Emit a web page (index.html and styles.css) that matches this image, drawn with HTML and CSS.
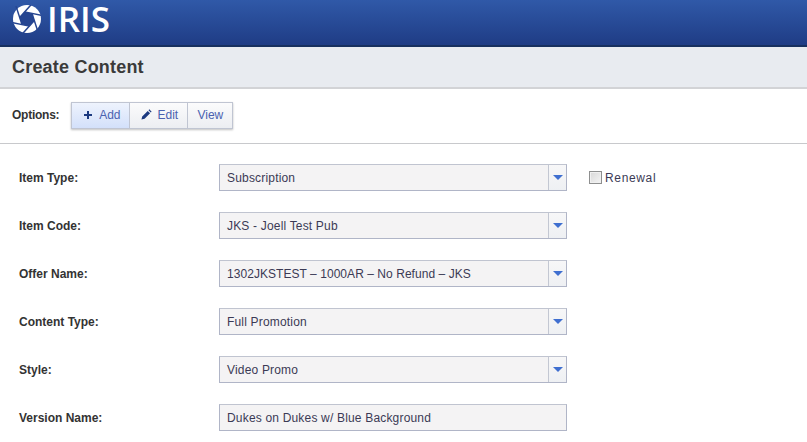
FILE: index.html
```html
<!DOCTYPE html>
<html lang="en">
<head>
<meta charset="utf-8">
<title>Create Content</title>
<link rel="stylesheet" href="styles.css">
</head>
<body>
<header class="topbar">
  <svg class="logo-mark" viewBox="-14 -14 28 28" width="28" height="28" aria-hidden="true">
    <circle r="14" fill="#fff"/>
    <g transform="rotate(12)">
      <polygon points="7.5,0 3.75,6.5 -3.75,6.5 -7.5,0 -3.75,-6.5 3.75,-6.5" fill="#264591"/>
      <g stroke="#264591" stroke-width="1.5">
        <path d="M7.5 0L-2.2 16.8"/>
        <path d="M7.5 0L-2.2 16.8" transform="rotate(60)"/>
        <path d="M7.5 0L-2.2 16.8" transform="rotate(120)"/>
        <path d="M7.5 0L-2.2 16.8" transform="rotate(180)"/>
        <path d="M7.5 0L-2.2 16.8" transform="rotate(240)"/>
        <path d="M7.5 0L-2.2 16.8" transform="rotate(300)"/>
      </g>
    </g>
  </svg>
  <span class="logo-text">IRIS</span>
</header>
<div class="titlebar"><h1 class="title">Create Content</h1></div>
<div class="options">
  <span class="options-label">Options:</span>
  <div class="btn-group">
    <button class="btn btn-add" type="button">
      <svg class="ico" viewBox="0 0 10 10" width="10" height="10" aria-hidden="true"><path d="M4 1h2v3h3v2H6v3H4V6H1V4h3z" fill="#1c3a80"/></svg>Add
    </button>
    <button class="btn btn-edit" type="button">
      <svg class="ico" viewBox="0 0 12 12" width="11" height="11" aria-hidden="true"><path d="M0.5 11.5l0.8-3.4 6-6 2.6 2.6-6 6zM8.2 1.3l0.9-0.9 2.5 2.5-0.9 0.9z" fill="#1c3a80"/></svg>Edit
    </button>
    <button class="btn btn-view" type="button">View</button>
  </div>
</div>
<main class="form">
  <div class="row">
    <label class="lbl">Item Type:</label>
    <div class="field"><span class="val">Subscription</span><span class="arrow"><i class="tri"></i></span></div>
    <label class="renewal"><i class="check"></i>Renewal</label>
  </div>
  <div class="row">
    <label class="lbl">Item Code:</label>
    <div class="field"><span class="val">JKS - Joell Test Pub</span><span class="arrow"><i class="tri"></i></span></div>
  </div>
  <div class="row">
    <label class="lbl">Offer Name:</label>
    <div class="field"><span class="val val-tight">1302JKSTEST – 1000AR – No Refund – JKS</span><span class="arrow"><i class="tri"></i></span></div>
  </div>
  <div class="row">
    <label class="lbl">Content Type:</label>
    <div class="field"><span class="val">Full Promotion</span><span class="arrow"><i class="tri"></i></span></div>
  </div>
  <div class="row">
    <label class="lbl">Style:</label>
    <div class="field"><span class="val">Video Promo</span><span class="arrow"><i class="tri"></i></span></div>
  </div>
  <div class="row">
    <label class="lbl">Version Name:</label>
    <div class="field"><span class="val">Dukes on Dukes w/ Blue Background</span></div>
  </div>
</main>
</body>
</html>
```
FILE: styles.css
```css
* { box-sizing: border-box; }
body {
  margin: 0;
  height: 442px;
  overflow: hidden;
  background: #fff;
  font-family: "Liberation Sans", Arial, sans-serif;
  font-size: 12px;
  color: #333;
}
.topbar {
  height: 47px;
  display: flex;
  align-items: flex-start;
  gap: 6px;
  padding: 0 0 0 13px;
  background: linear-gradient(#3059a8, #1f3c85);
  border-bottom: 2px solid #17305f;
}
.logo-mark { flex: none; margin-top: 5px; }
.logo-text {
  font-family: "Open Sans", sans-serif;
  font-size: 35px;
  font-weight: 600;
  line-height: 37px;
  color: #fff;
}
.titlebar {
  height: 42px;
  display: flex;
  align-items: center;
  padding: 1px 12px 0;
  background: #e8ebf0;
  border-bottom: 2px solid #d2d3d6;
}
.title {
  margin: 0;
  font-size: 18px;
  font-weight: bold;
  letter-spacing: .2px;
  color: #3a3a3a;
}
.options {
  height: 55px;
  display: flex;
  align-items: center;
  gap: 12px;
  padding: 0 12px 1px;
  border-bottom: 1px solid #c8c9cc;
}
.options-label { font-weight: bold; letter-spacing: -.25px; color: #333; margin-bottom: 1px; }
.btn-group {
  display: flex;
  height: 27px;
  border: 1px solid #c0c5d2;
  box-shadow: 0 1px 2px rgba(0,0,0,.25);
}
.btn {
  height: 100%;
  padding: 0 0 2px;
  border: 0;
  border-right: 1px solid #c0c5d2;
  display: flex;
  align-items: center;
  justify-content: center;
  gap: 6px;
  font: 12px "Liberation Sans", Arial, sans-serif;
  color: #4a62b0;
  background: linear-gradient(#fbfbfc, #eceef2);
}
.btn-add { width: 58px; background: linear-gradient(#eef3fd, #d3e0fa); padding-left: 2px; }
.btn-edit { width: 58px; gap: 5px; padding-left: 2px; }
.btn-view { width: 44px; border-right: 0; }
.form { padding-top: 20px; }
.row {
  display: flex;
  align-items: center;
  height: 27px;
  margin-bottom: 21px;
  padding-left: 19px;
}
.lbl { width: 200px; font-weight: bold; color: #333; }
.field {
  width: 348px;
  height: 27px;
  display: flex;
  align-items: center;
  justify-content: space-between;
  background: #f4f3f4;
  border: 1px solid #b0b5c7;
  border-top-color: #c0c4d0;
}
.val { padding: 1px 0 0 7px; letter-spacing: .18px; color: #3b3a55; }
.val-tight { letter-spacing: .05px; }
.arrow {
  width: 18px;
  height: 100%;
  display: flex;
  align-items: center;
  justify-content: center;
  background: linear-gradient(#f7f7f8, #eef0f3);
  border-left: 1px solid #c3c7d2;
}
.tri {
  display: block;
  width: 0;
  height: 0;
  border-left: 5px solid transparent;
  border-right: 5px solid transparent;
  border-top: 5px solid #3f6fd0;
}
.renewal {
  display: flex;
  align-items: center;
  gap: 3px;
  margin-left: 22px;
  letter-spacing: .65px;
  color: #3b3a55;
}
.check {
  display: block;
  width: 13px;
  height: 13px;
  border: 1px solid #8e8f8f;
  background: linear-gradient(135deg, #d8d8d8, #f4f4f4);
  box-shadow: inset 0 0 0 1px #f0f0f0;
}
.ico { flex: none; }
```
